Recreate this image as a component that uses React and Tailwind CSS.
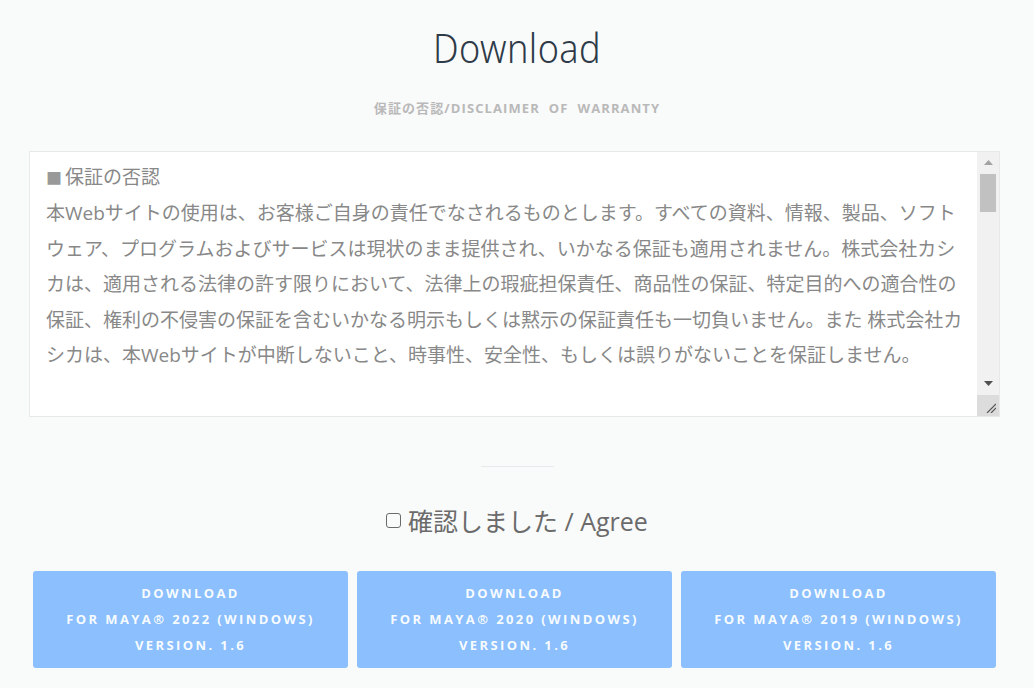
import { useState } from "react";

const DISCLAIMER = `本Webサイトの使用は、お客様ご自身の責任でなされるものとします。すべての資料、情報、製品、ソフトウェア、プログラムおよびサービスは現状のまま提供され、いかなる保証も適用されません。株式会社カシカは、適用される法律の許す限りにおいて、法律上の瑕疵担保責任、商品性の保証、特定目的への適合性の保証、権利の不侵害の保証を含むいかなる明示もしくは黙示の保証責任も一切負いません。また 株式会社カシカは、本Webサイトが中断しないこと、時事性、安全性、もしくは誤りがないことを保証しません。`;

const BUILDS = [{ maya: "2022" }, { maya: "2020" }, { maya: "2019" }];

function DownloadButton({ maya }) {
  return (
    <button
      type="button"
      className="h-[97px] rounded-[3px] bg-[#8bbffd] text-[13px] font-bold leading-[26px] tracking-[2.4px] text-white/95 font-['Open_Sans',sans-serif]"
    >
      <div>DOWNLOAD</div>
      <div>FOR MAYA® {maya} (WINDOWS)</div>
      <div>VERSION. 1.6</div>
    </button>
  );
}

// the box's scrollbar, drawn since the headless page has overlay scrollbars
function FakeScrollbar() {
  return (
    <div className="flex w-[22px] shrink-0 flex-col bg-[#f1f1f1]">
      <div className="flex h-[22px] items-center justify-center">
        <svg width="9" height="5" viewBox="0 0 9 5">
          <path d="M0 5 L4.5 0 L9 5 Z" fill="#a3a3a3" />
        </svg>
      </div>
      <div className="mx-[3px] h-[38px] bg-[#c1c1c1]" />
      <div className="flex-1" />
      <div className="flex h-[22px] items-center justify-center">
        <svg width="9" height="5" viewBox="0 0 9 5">
          <path d="M0 0 L9 0 L4.5 5 Z" fill="#505050" />
        </svg>
      </div>
      <div className="flex h-[21px] items-end justify-end bg-[#dcdcdc] p-[3px]">
        <svg width="10" height="10" viewBox="0 0 10 10">
          <path d="M1 10 L10 1 M5 10 L10 5" stroke="#555" strokeWidth="1.2" />
        </svg>
      </div>
    </div>
  );
}

export default function App() {
  const [agreed, setAgreed] = useState(false);

  return (
    <div className="min-h-[688px] bg-[#f9fafa] font-['Open_Sans','Noto_Sans_CJK_JP',sans-serif]">
      <div className="pt-[22px] text-center">
        <h1 className="scale-x-90 text-[40px] font-light leading-[52px] tracking-[0.5px] text-[#2e3a48] font-['Noto_Sans','Open_Sans',sans-serif]">
          Download
        </h1>
        <p className="mt-[25px] text-[13px] font-bold tracking-[1.1px] text-[#b9b9b9]">
          保証の否認/DISCLAIMER&nbsp; OF&nbsp; WARRANTY
        </p>
      </div>

      {/* disclaimer box */}
      <div className="ml-[29px] mt-[32px] flex h-[266px] w-[971px] border border-[#e6e8ea] bg-white">
        <div className="flex-1 pl-[16px] pr-[12px] pt-[8px] text-[19px] leading-[35.6px] text-[#888] font-['Open_Sans','Noto_Sans_CJK_JP',sans-serif]">
          <div>
            <span className="mr-[3px] text-[16px] text-[#999]">■</span>保証の否認
          </div>
          <div>{DISCLAIMER}</div>
        </div>
        <FakeScrollbar />
      </div>

      {/* divider */}
      <div className="mx-auto mt-[49px] h-px w-[73px] bg-[#e7eaec]" />

      {/* agree */}
      <div className="mt-[37px] flex items-center justify-center gap-[7px]">
        <button
          type="button"
          aria-label="agree"
          onClick={() => setAgreed(!agreed)}
          className={
            agreed
              ? "h-[15px] w-[15px] rounded-[3px] border-[1.5px] border-[#6b6b6b] bg-[#6b6b6b]"
              : "h-[15px] w-[15px] rounded-[3px] border-[1.5px] border-[#6b6b6b] bg-transparent"
          }
        />
        <span className="text-[25px] leading-[34px] text-[#6b6b6b]">確認しました / Agree</span>
      </div>

      {/* downloads */}
      <div className="ml-[33px] mt-[33px] grid w-[963px] grid-cols-3 gap-[9px]">
        {BUILDS.map((b) => (
          <DownloadButton key={b.maya} maya={b.maya} />
        ))}
      </div>
    </div>
  );
}
